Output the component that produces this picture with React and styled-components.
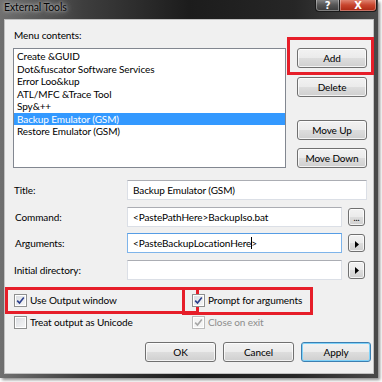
import React from 'react'
import styled, { createGlobalStyle, css } from 'styled-components'

const GlobalStyle = createGlobalStyle`
  html, body {
    margin: 0;
    padding: 0;
    background: #fff;
  }
  body {
    width: 382px;
    height: 382px;
    overflow: hidden;
    font-family: Lato, "Liberation Sans", sans-serif;
    font-size: 10px;
    letter-spacing: -0.1px;
    color: #000;
  }
`

const Window = styled.div`
  width: 378px;
  height: 378px;
  display: flex;
  flex-direction: column;
  background: linear-gradient(90deg, #707070 0%, #3e3e3e 22%, #1c1c1c 50%, #262626 78%, #4a4a4a 100%);
  box-shadow: 2px 2px 3px rgba(0, 0, 0, 0.45);
`

const TitleBar = styled.div`
  height: 19px;
  display: flex;
  align-items: flex-start;
  padding-left: 4px;
  padding-right: 1px;
`

const Caption = styled.div`
  flex: 1;
  margin-top: 1px;
  font-size: 10.5px;
  line-height: 13px;
  color: #050505;
  text-shadow: 0 0 3px #c8c8c8, 0 0 6px #a0a0a0, 0 0 8px #909090;
`

const CaptionButton = styled.div`
  height: 13px;
  margin-top: -1px;
  box-sizing: border-box;
  display: flex;
  align-items: center;
  justify-content: center;
  color: #fff;
  font-family: "DejaVu Sans", sans-serif;
  font-weight: bold;
  font-size: 10px;
  border: 1px solid #1a1a1a;
  border-top: none;
  box-shadow: inset 0 0 0 1px rgba(255, 255, 255, 0.35);
  ${p => p.$close ? css`
    width: 38px;
    border-radius: 0 0 4px 0;
    background: linear-gradient(180deg, #e4907e 0%, #c8452e 50%, #a92612 100%);
  ` : css`
    width: 24px;
    border-radius: 0 0 0 4px;
    border-right: none;
    background: linear-gradient(180deg, #8a8a8a 0%, #555 50%, #3a3a3a 100%);
  `}
`

const Client = styled.div`
  flex: 1;
  margin: 0 4px 4px 4px;
  background: #f0f0f0;
  border: 1px solid #c2c2c2;
  padding: 9px 6px 0 8px;
  display: flex;
  flex-direction: column;
`

const SectionLabel = styled.div`
  line-height: 13px;
  margin: 0 0 6px 1px;
`

const TopSection = styled.div`
  display: flex;
  gap: 11px;
`

const ListBox = styled.div`
  width: 273px;
  height: 120px;
  box-sizing: border-box;
  border: 1px solid #828790;
  background: #fff;
  padding: 1px 0 0 0;
`

const ListItem = styled.div`
  height: 12.5px;
  line-height: 12.5px;
  padding-left: 3px;
  white-space: nowrap;
  ${p => p.$selected && css`
    background: #3399ff;
    color: #fff;
  `}
`

const ButtonColumn = styled.div`
  width: 70px;
  height: 120px;
  display: flex;
  flex-direction: column;
  justify-content: space-between;
`

const ButtonGroup = styled.div`
  display: flex;
  flex-direction: column;
  gap: ${p => p.$gap}px;
`

const Button = styled.div`
  width: ${p => p.$width || 70}px;
  height: 20px;
  box-sizing: border-box;
  border: 1px solid ${p => p.$default ? '#3c7fb1' : '#707070'};
  border-radius: 3px;
  background: linear-gradient(180deg, #f2f2f2 0%, #ebebeb 48%, #dddddd 52%, #cfcfcf 100%);
  box-shadow: inset 0 0 0 1px ${p => p.$default ? '#7fd2f9' : 'rgba(255,255,255,0.75)'};
  display: flex;
  align-items: center;
  justify-content: center;
  white-space: nowrap;
`

const Highlight = styled.div`
  position: relative;
  &::after {
    content: '';
    position: absolute;
    top: ${p => p.$t}px;
    right: ${p => p.$r}px;
    bottom: ${p => p.$b}px;
    left: ${p => p.$l}px;
    border: 3px solid #e61e29;
    pointer-events: none;
  }
`

const Form = styled.div`
  margin-top: 12px;
  display: flex;
  flex-direction: column;
  gap: 6.5px;
`

const FormRow = styled.div`
  display: flex;
  align-items: center;
  height: 20px;
`

const FieldLabel = styled.div`
  width: 114px;
  padding-left: ${p => p.$indent || 1}px;
  box-sizing: border-box;
`

const Input = styled.div`
  width: ${p => p.$width}px;
  height: 20px;
  box-sizing: border-box;
  background: #fff;
  border: 1px solid ${p => p.$focused ? '#7eb4ea' : '#dbdfe6'};
  border-top-color: ${p => p.$focused ? '#569de5' : '#abadb3'};
  display: flex;
  align-items: center;
  padding-left: 5px;
  white-space: nowrap;
`

const Caret = styled.span`
  display: inline-block;
  width: 1px;
  height: 12px;
  background: #000;
  margin: 0 -0.5px;
`

const SideButton = styled(Button)`
  width: 17px;
  height: 18px;
  margin-left: 6px;
  font-size: 9px;
  line-height: 1;
  padding-top: 2px;
`

const CheckGrid = styled.div`
  margin-top: 12.5px;
  display: grid;
  grid-template-columns: 178px auto;
  row-gap: 6px;
  padding-left: 1px;
  justify-content: start;
`

const CheckRow = styled.div`
  display: flex;
  align-items: center;
  height: 16px;
  gap: 3px;
  color: ${p => p.$disabled ? '#8d8d8d' : '#000'};
  white-space: nowrap;
`

const Box = styled.span`
  width: 13px;
  height: 13px;
  box-sizing: border-box;
  border: 1px solid ${p => p.$disabled ? '#bcbcbc' : '#8e8f8f'};
  background: ${p => p.$disabled ? '#f4f4f4' : 'linear-gradient(135deg, #d9dce1 0%, #f7f7f7 100%)'};
  box-shadow: inset 0 0 0 1px #fff;
  display: flex;
  align-items: center;
  justify-content: center;
  flex-shrink: 0;
`

const Actions = styled.div`
  margin-top: 12px;
  margin-right: -4px;
  display: flex;
  justify-content: flex-end;
  gap: 7px;
`

const menuItems = [
  'Create &GUID',
  'Dot&fuscator Software Services',
  'Error Loo&kup',
  'ATL/MFC &Trace Tool',
  'Spy&++',
  'Backup Emulator (GSM)',
  'Restore Emulator (GSM)',
]

function Checkbox({ checked, disabled, label }) {
  return (
    <CheckRow $disabled={disabled}>
      <Box $disabled={disabled}>
        {checked && (
          <svg width="9" height="9" viewBox="0 0 9 9">
            <path d="M1.2 4.6 L3.5 7 L7.8 1.4" fill="none"
              stroke={disabled ? '#a6a6a6' : '#2b3f8c'} strokeWidth="1.6" />
          </svg>
        )}
      </Box>
      {label}
    </CheckRow>
  )
}

function Arrow() {
  return (
    <svg width="4" height="7" viewBox="0 0 4 7">
      <path d="M0 0 L4 3.5 L0 7 Z" fill="#000" />
    </svg>
  )
}

export default function App() {
  return (
    <>
      <GlobalStyle />
      <Window>
        <TitleBar>
          <Caption>External Tools</Caption>
          <CaptionButton>?</CaptionButton>
          <CaptionButton $close>X</CaptionButton>
        </TitleBar>
        <Client>
          <SectionLabel>Menu contents:</SectionLabel>
          <TopSection>
            <ListBox>
              {menuItems.map((item, i) => (
                <ListItem key={item} $selected={i === 5}>{item}</ListItem>
              ))}
            </ListBox>
            <ButtonColumn>
              <ButtonGroup $gap={9}>
                <Highlight $t={-11} $r={-7} $b={-7} $l={-10}>
                  <Button>Add</Button>
                </Highlight>
                <Button>Delete</Button>
              </ButtonGroup>
              <ButtonGroup $gap={8}>
                <Button>Move Up</Button>
                <Button>Move Down</Button>
              </ButtonGroup>
            </ButtonColumn>
          </TopSection>

          <Form>
            <FormRow>
              <FieldLabel>Title:</FieldLabel>
              <Input $width={240}>Backup Emulator (GSM)</Input>
            </FormRow>
            <FormRow>
              <FieldLabel $indent={2}>Command:</FieldLabel>
              <Input $width={215}>&lt;PastePathHere&gt;BackupIso.bat</Input>
              <SideButton>...</SideButton>
            </FormRow>
            <FormRow>
              <FieldLabel $indent={2}>Arguments:</FieldLabel>
              <Input $width={215} $focused>&lt;PasteBackupLocationHere<Caret />&gt;</Input>
              <SideButton><Arrow /></SideButton>
            </FormRow>
            <FormRow>
              <FieldLabel>Initial directory:</FieldLabel>
              <Input $width={215} />
              <SideButton><Arrow /></SideButton>
            </FormRow>
          </Form>

          <CheckGrid>
            <Highlight $t={-5} $r={-7} $b={-6} $l={-9}>
              <Checkbox checked label="Use Output window" />
            </Highlight>
            <Highlight $t={-5} $r={-11} $b={-7} $l={-10}>
              <Checkbox checked label="Prompt for arguments" />
            </Highlight>
            <Checkbox label="Treat output as Unicode" />
            <Checkbox checked disabled label="Close on exit" />
          </CheckGrid>

          <Actions>
            <Button $width={71}>OK</Button>
            <Button $width={71}>Cancel</Button>
            <Button $width={70} $default>Apply</Button>
          </Actions>
        </Client>
      </Window>
    </>
  )
}
